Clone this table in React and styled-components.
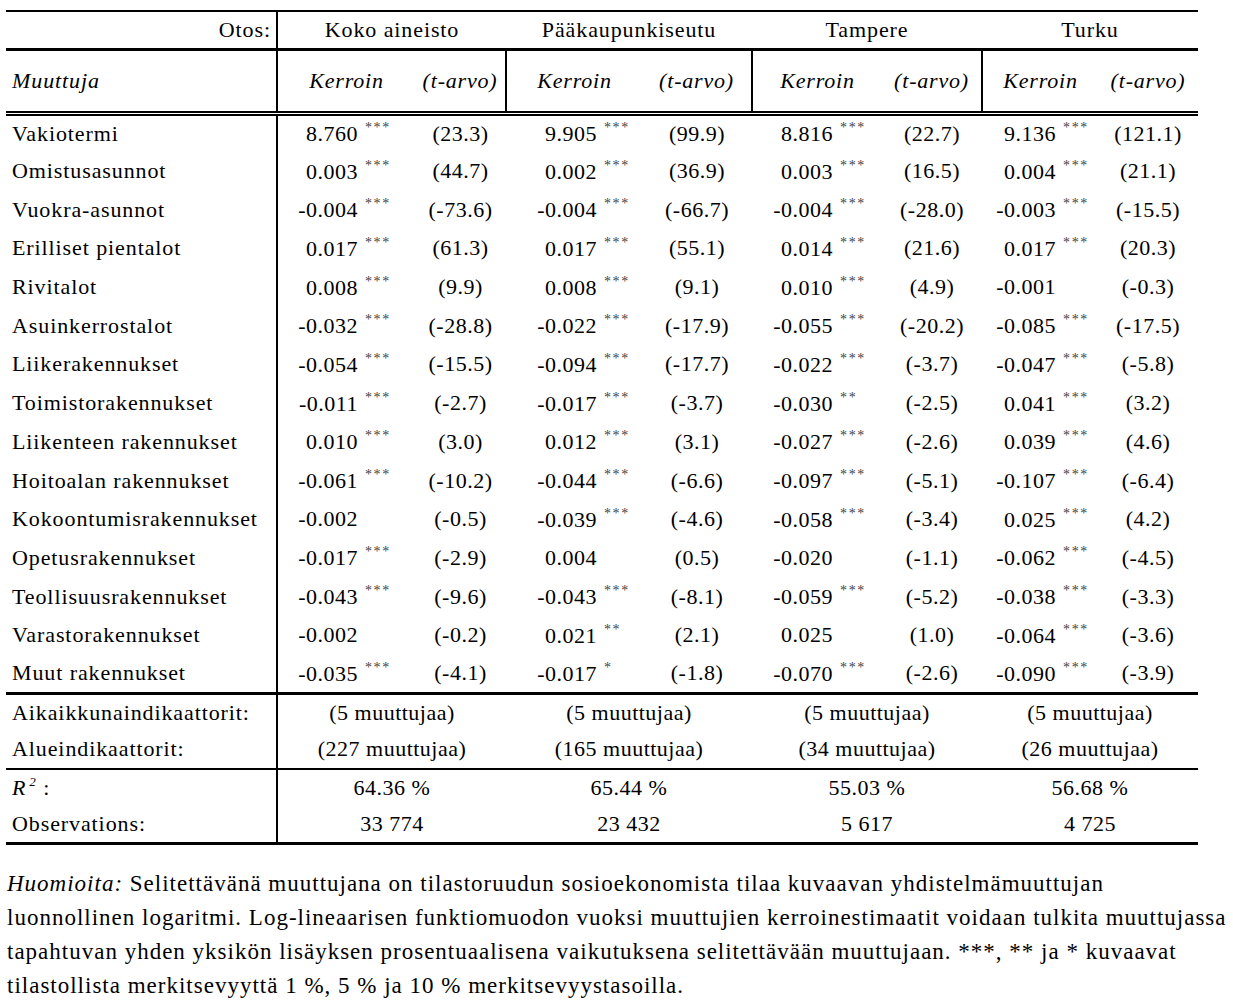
import React from "react";
import styled, { createGlobalStyle } from "styled-components";

const GlobalStyle = createGlobalStyle`
  body {
    margin: 0;
    background: #fff;
    color: #000;
    font-family: "Liberation Serif", "Times New Roman", serif;
  }
`;

const groups = [
  { name: "Koko aineisto", coef: 138, t: 91, num: 80, vars: "(5 muuttujaa)", area: "(227 muuttujaa)", r2: "64.36 %", obs: "33 774" },
  { name: "Pääkaupunkiseutu", coef: 136, t: 110, num: 91, vars: "(5 muuttujaa)", area: "(165 muuttujaa)", r2: "65.44 %", obs: "23 432" },
  { name: "Tampere", coef: 130, t: 100, num: 81, vars: "(5 muuttujaa)", area: "(34 muuttujaa)", r2: "55.03 %", obs: "5 617" },
  { name: "Turku", coef: 116, t: 100, num: 74, vars: "(5 muuttujaa)", area: "(26 muuttujaa)", r2: "56.68 %", obs: "4 725" },
];

const rows = [
  ["Vakiotermi", ["8.760", "***", "(23.3)"], ["9.905", "***", "(99.9)"], ["8.816", "***", "(22.7)"], ["9.136", "***", "(121.1)"]],
  ["Omistusasunnot", ["0.003", "***", "(44.7)"], ["0.002", "***", "(36.9)"], ["0.003", "***", "(16.5)"], ["0.004", "***", "(21.1)"]],
  ["Vuokra-asunnot", ["-0.004", "***", "(-73.6)"], ["-0.004", "***", "(-66.7)"], ["-0.004", "***", "(-28.0)"], ["-0.003", "***", "(-15.5)"]],
  ["Erilliset pientalot", ["0.017", "***", "(61.3)"], ["0.017", "***", "(55.1)"], ["0.014", "***", "(21.6)"], ["0.017", "***", "(20.3)"]],
  ["Rivitalot", ["0.008", "***", "(9.9)"], ["0.008", "***", "(9.1)"], ["0.010", "***", "(4.9)"], ["-0.001", "", "(-0.3)"]],
  ["Asuinkerrostalot", ["-0.032", "***", "(-28.8)"], ["-0.022", "***", "(-17.9)"], ["-0.055", "***", "(-20.2)"], ["-0.085", "***", "(-17.5)"]],
  ["Liikerakennukset", ["-0.054", "***", "(-15.5)"], ["-0.094", "***", "(-17.7)"], ["-0.022", "***", "(-3.7)"], ["-0.047", "***", "(-5.8)"]],
  ["Toimistorakennukset", ["-0.011", "***", "(-2.7)"], ["-0.017", "***", "(-3.7)"], ["-0.030", "**", "(-2.5)"], ["0.041", "***", "(3.2)"]],
  ["Liikenteen rakennukset", ["0.010", "***", "(3.0)"], ["0.012", "***", "(3.1)"], ["-0.027", "***", "(-2.6)"], ["0.039", "***", "(4.6)"]],
  ["Hoitoalan rakennukset", ["-0.061", "***", "(-10.2)"], ["-0.044", "***", "(-6.6)"], ["-0.097", "***", "(-5.1)"], ["-0.107", "***", "(-6.4)"]],
  ["Kokoontumisrakennukset", ["-0.002", "", "(-0.5)"], ["-0.039", "***", "(-4.6)"], ["-0.058", "***", "(-3.4)"], ["0.025", "***", "(4.2)"]],
  ["Opetusrakennukset", ["-0.017", "***", "(-2.9)"], ["0.004", "", "(0.5)"], ["-0.020", "", "(-1.1)"], ["-0.062", "***", "(-4.5)"]],
  ["Teollisuusrakennukset", ["-0.043", "***", "(-9.6)"], ["-0.043", "***", "(-8.1)"], ["-0.059", "***", "(-5.2)"], ["-0.038", "***", "(-3.3)"]],
  ["Varastorakennukset", ["-0.002", "", "(-0.2)"], ["0.021", "**", "(2.1)"], ["0.025", "", "(1.0)"], ["-0.064", "***", "(-3.6)"]],
  ["Muut rakennukset", ["-0.035", "***", "(-4.1)"], ["-0.017", "*", "(-1.8)"], ["-0.070", "***", "(-2.6)"], ["-0.090", "***", "(-3.9)"]],
];

export default function App() {
  return (
    <Page>
      <GlobalStyle />
      <Table>
        <colgroup>
          <col style={{ width: 271 }} />
          {groups.map((g) => (
            <React.Fragment key={g.name}>
              <col style={{ width: g.coef }} />
              <col style={{ width: g.t }} />
            </React.Fragment>
          ))}
        </colgroup>
        <thead>
          <SampleRow>
            <LabelCell $right>Otos:</LabelCell>
            {groups.map((g) => (
              <GroupCell key={g.name} colSpan={2}>
                {g.name}
              </GroupCell>
            ))}
          </SampleRow>
          <HeadRow>
            <LabelCell>
              <i>Muuttuja</i>
            </LabelCell>
            {groups.map((g, i) => (
              <React.Fragment key={g.name}>
                <HeadCell>Kerroin</HeadCell>
                <HeadCell $sep={i < groups.length - 1}>(t-arvo)</HeadCell>
              </React.Fragment>
            ))}
          </HeadRow>
        </thead>
        <tbody>
          {rows.map(([label, ...vals], r) => (
            <DataRow key={label} $last={r === rows.length - 1}>
              <LabelCell>{label}</LabelCell>
              {vals.map(([num, stars, t], i) => (
                <React.Fragment key={i}>
                  <CoefCell>
                    <Num $w={groups[i].num}>{num}</Num>
                    <Stars>{stars}</Stars>
                  </CoefCell>
                  <TCell>{t}</TCell>
                </React.Fragment>
              ))}
            </DataRow>
          ))}
          <SumRow>
            <LabelCell>Aikaikkunaindikaattorit:</LabelCell>
            {groups.map((g) => (
              <SumCell key={g.name} colSpan={2}>
                {g.vars}
              </SumCell>
            ))}
          </SumRow>
          <SumRow $rule>
            <LabelCell>Alueindikaattorit:</LabelCell>
            {groups.map((g) => (
              <SumCell key={g.name} colSpan={2}>
                {g.area}
              </SumCell>
            ))}
          </SumRow>
          <SumRow>
            <LabelCell>
              <i>
                R<Sup>2</Sup>
              </i>{" "}
              :
            </LabelCell>
            {groups.map((g) => (
              <SumCell key={g.name} colSpan={2}>
                {g.r2}
              </SumCell>
            ))}
          </SumRow>
          <SumRow $end>
            <LabelCell>Observations:</LabelCell>
            {groups.map((g) => (
              <SumCell key={g.name} colSpan={2}>
                {g.obs}
              </SumCell>
            ))}
          </SumRow>
        </tbody>
      </Table>
      <Note>
        <i>Huomioita:</i> Selitettävänä muuttujana on tilastoruudun sosioekonomista tilaa kuvaavan yhdistelmämuuttujan
        <br />
        luonnollinen logaritmi. Log-lineaarisen funktiomuodon vuoksi muuttujien kerroinestimaatit voidaan tulkita muuttujassa
        <br />
        tapahtuvan yhden yksikön lisäyksen prosentuaalisena vaikutuksena selitettävään muuttujaan. ***, ** ja * kuvaavat
        <br />
        tilastollista merkitsevyyttä 1 %, 5 % ja 10 % merkitsevyystasoilla.
      </Note>
    </Page>
  );
}

const Page = styled.div`
  padding: 10px 0 0 6px;
  width: 1227px;
`;

const Table = styled.table`
  width: 1192px;
  table-layout: fixed;
  border-collapse: collapse;
  font-size: 22px;
  letter-spacing: 0.5px;

  td,
  th {
    padding: 0;
    font-weight: normal;
    white-space: nowrap;
  }
  td:first-child,
  th:first-child {
    border-right: 2px solid #000;
  }
`;

const SampleRow = styled.tr`
  height: 38px;
  border-top: 2px solid #000;
  border-bottom: 3px solid #000;
`;

const HeadRow = styled.tr`
  height: 64px;
  border-bottom: 5px double #000;
  font-style: italic;
`;

const DataRow = styled.tr`
  height: 38.7px;
  border-bottom: ${(p) => (p.$last ? "3px solid #000" : "none")};
`;

const SumRow = styled.tr`
  height: 37.6px;
  border-bottom: ${(p) => (p.$rule ? "2px solid #000" : p.$end ? "3px solid #000" : "none")};
`;

const LabelCell = styled.td`
  text-align: ${(p) => (p.$right ? "right" : "left")};
  letter-spacing: 0.9px;
  padding: ${(p) => (p.$right ? "0 5px 0 0" : "0 0 0 6px")} !important;
`;

const GroupCell = styled.th`
  text-align: center;
  letter-spacing: 0.9px;
`;

const HeadCell = styled.th`
  text-align: center;
  letter-spacing: 0.8px;
  border-right: ${(p) => (p.$sep ? "2px solid #000" : "none")};
`;

const CoefCell = styled.td`
  text-align: left;
`;

const Num = styled.span`
  display: inline-block;
  width: ${(p) => p.$w}px;
  text-align: right;
`;

const Stars = styled.span`
  display: inline-block;
  margin-left: 7px;
  font-size: 14px;
  letter-spacing: 1.6px;
  color: #444;
  vertical-align: 9px;
`;

const TCell = styled.td`
  text-align: center;
`;

const SumCell = styled.td`
  text-align: center;
`;

const Sup = styled.sup`
  font-size: 13px;
  vertical-align: 9px;
  margin-left: 3px;
`;

const Note = styled.p`
  margin: 22px 0 0 1px;
  font-size: 23px;
  letter-spacing: 1px;
  line-height: 34px;
  white-space: nowrap;
`;
